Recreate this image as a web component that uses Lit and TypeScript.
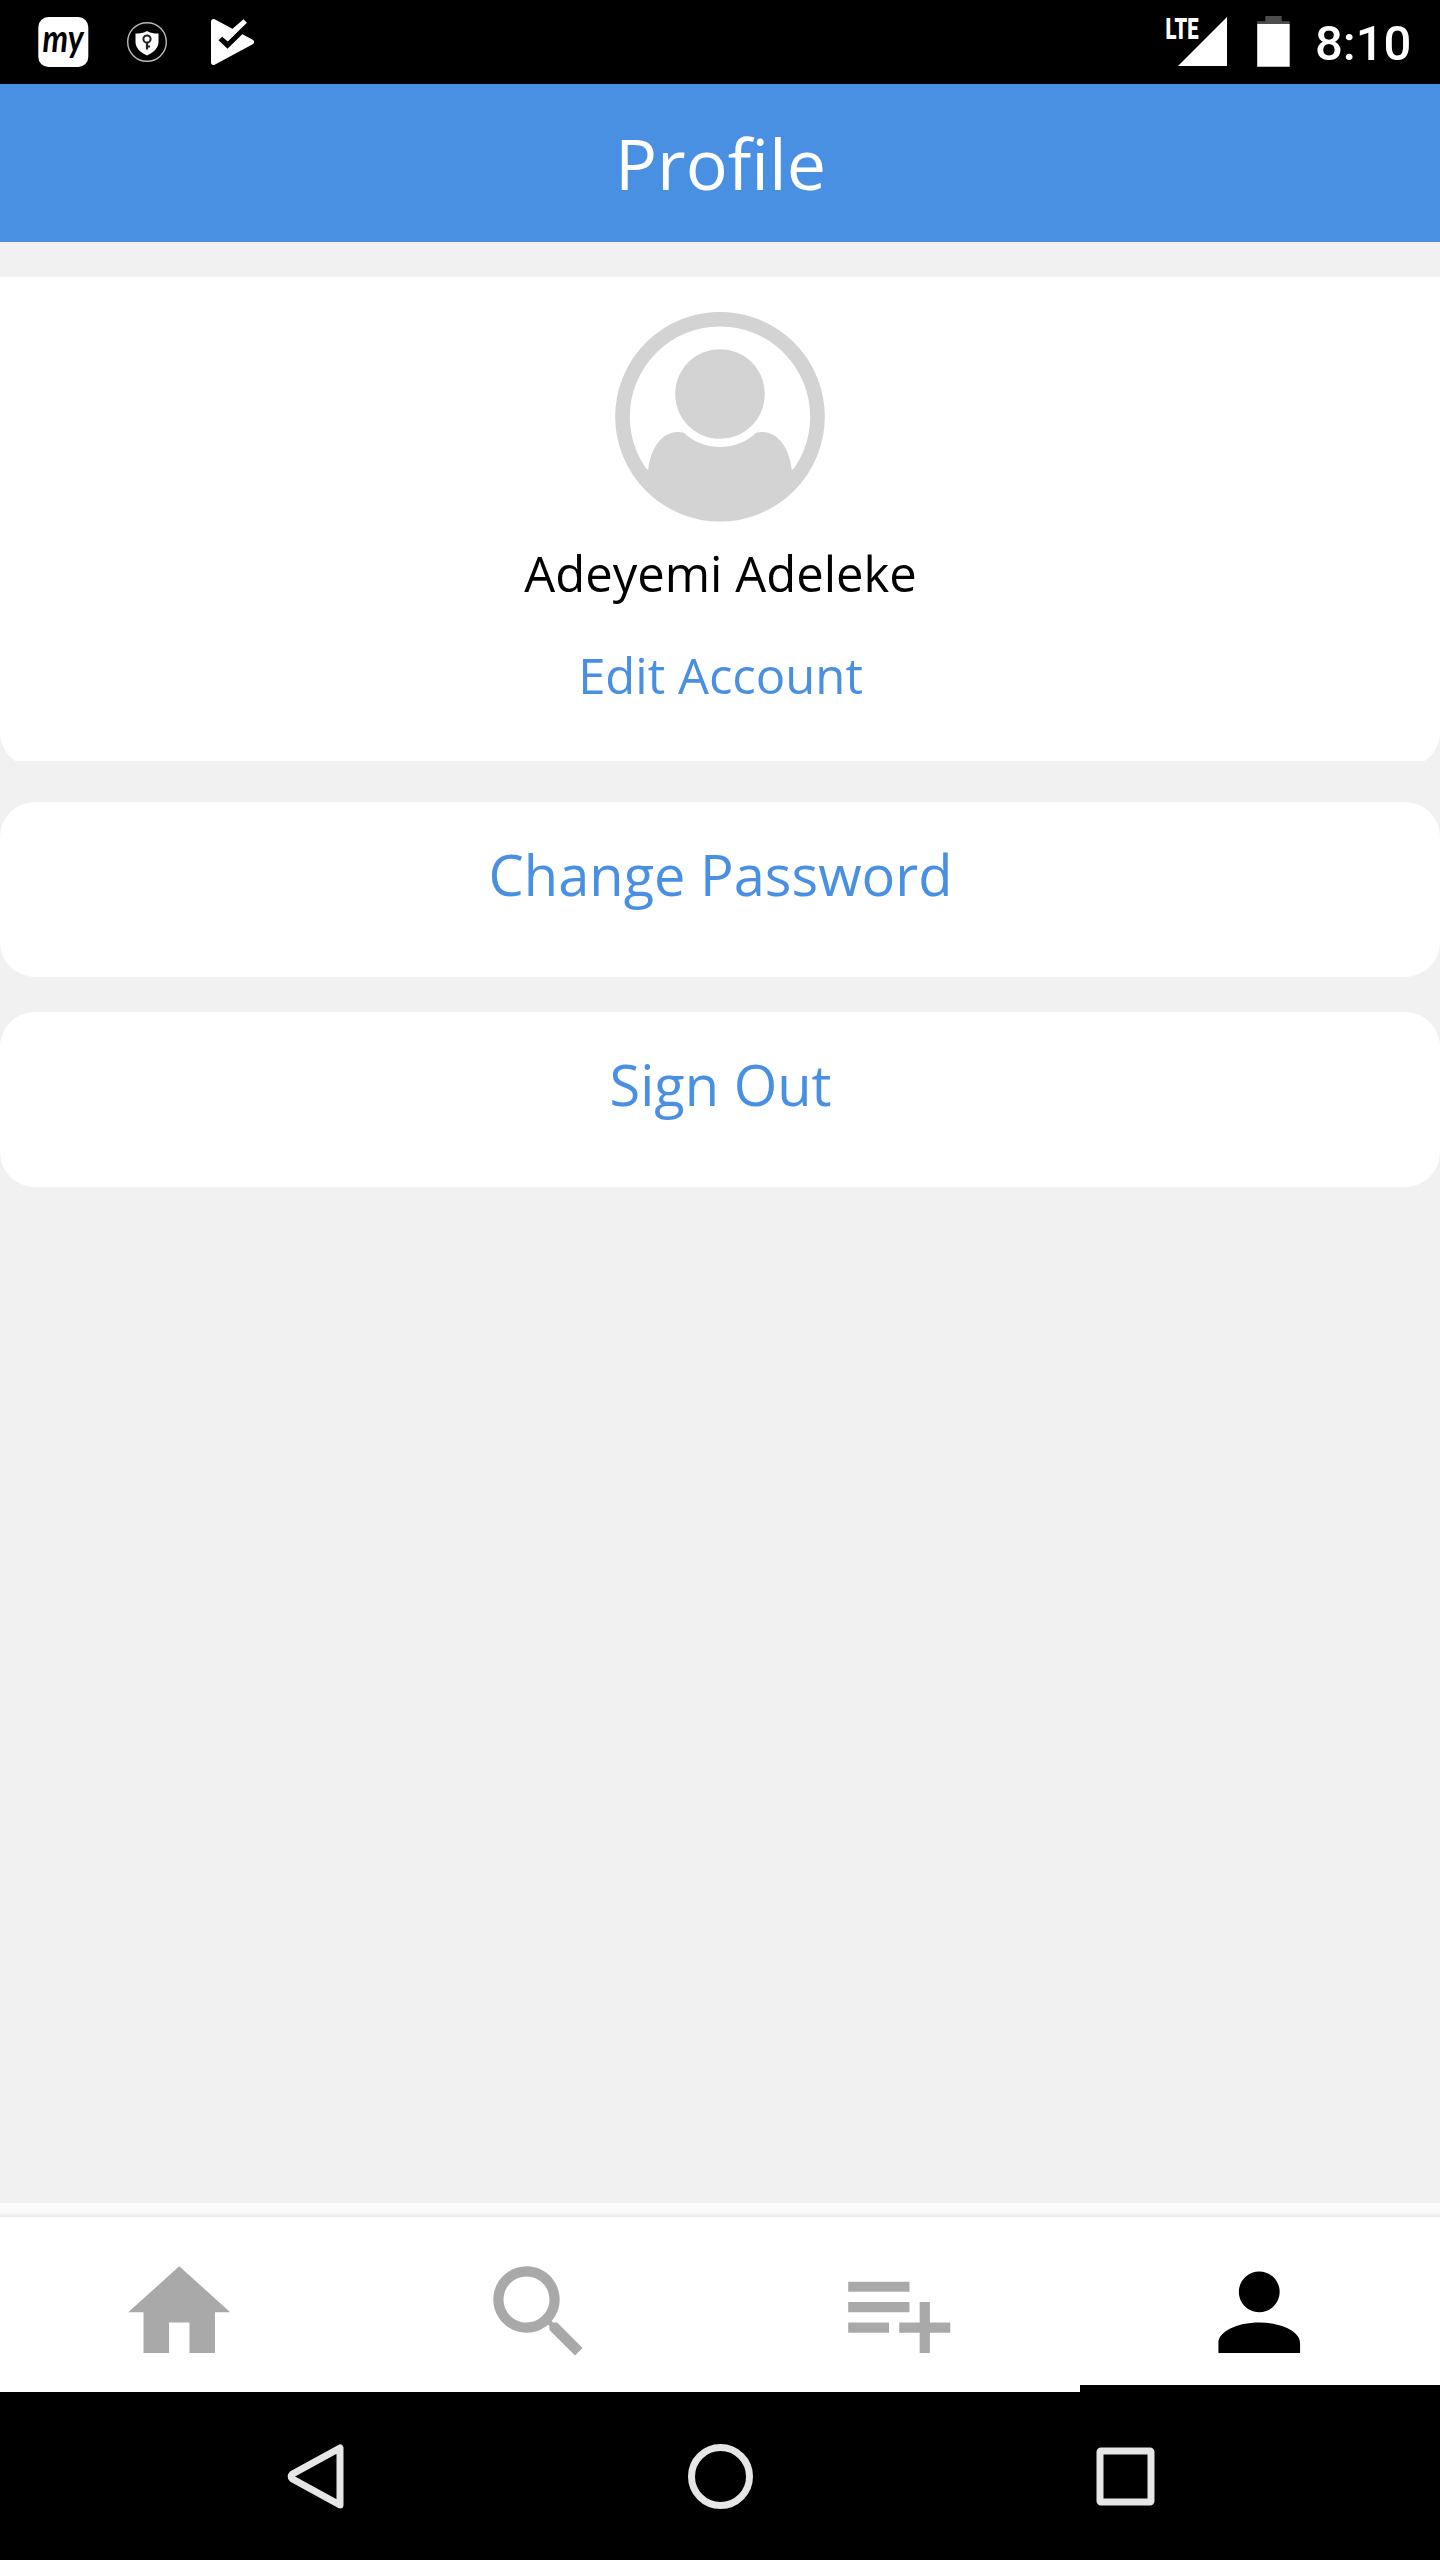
import { LitElement, html, css, svg } from "lit";
import { customElement, property } from "lit/decorators.js";
import { classMap } from "lit/directives/class-map.js";

const TABS = [
  { id: "home", label: "Home", d: "M10 20v-6h4v6h5v-8h3L12 3 2 12h3v8z" },
  {
    id: "search",
    label: "Search",
    d: "M15.5 14h-.79l-.28-.27C15.41 12.59 16 11.11 16 9.5 16 5.91 13.09 3 9.5 3S3 5.91 3 9.5 5.91 16 9.5 16c1.61 0 3.09-.59 4.23-1.57l.27.28v.79l5 4.99L20.49 19l-4.99-5zm-6 0C7.01 14 5 11.99 5 9.5S7.01 5 9.5 5 14 7.01 14 9.5 11.99 14 9.5 14z",
  },
  {
    id: "add",
    label: "Add to list",
    d: "M14 10H2v2h12v-2zm0-4H2v2h12V6zm4 8v-4h-2v4h-4v2h4v4h2v-4h4v-2h-4zM2 16h8v-2H2v2z",
  },
  {
    id: "profile",
    label: "Profile",
    d: "M12 12c2.21 0 4-1.79 4-4s-1.79-4-4-4-4 1.79-4 4 1.79 4 4 4zm0 2c-4.42 0-8 1.79-8 4v2h16v-2c0-2.21-3.580-4-8-4z",
  },
];

@customElement("status-bar")
class StatusBar extends LitElement {
  static styles = css`
    :host { display: flex; justify-content: space-between; height: 84px; background: #000; }
    svg { display: block; }
    .right { display: flex; }
    .time { width: 125px; font: 500 49px/88px Roboto, sans-serif; color: #fff; white-space: nowrap; }
    .logo { font: italic 700 38px Lato, sans-serif; }
    .net { font: 900 29.5px Roboto, sans-serif; }
  `;
  render() {
    return html`
      <svg width="300" height="84" viewBox="0 0 300 84">
        <rect x="38.3" y="17" width="50" height="50" rx="10" fill="#fff" />
        <text class="logo" x="42.500" y="51.500" textLength="41" lengthAdjust="spacingAndGlyphs">my</text>
        <circle cx="147" cy="42" r="19.3" fill="none" stroke="#bbb" stroke-width="1.4" />
        <path fill="#fff" d="M147 31c3 2 7 2.600 11.500 2.600v8.400c0 6-5 10.500-11.500 13.600-6.500-3.100-11.500-7.600-11.500-13.600v-8.400c4.500 0 8.500-.6 11.500-2.600z" />
        <circle cx="147" cy="39" r="3.600" fill="none" stroke="#222" stroke-width="2" />
        <path d="M147 42.500v7M147 46.500h3" stroke="#222" stroke-width="2.200" fill="none" />
        <path fill="#fff" stroke="#fff" stroke-width="5" stroke-linejoin="round" d="M213.500 21.500l38 20.500-38 20.500z" />
        <path d="M218.500 40.300l3.900-3.700 5.300 4.600L247 22l6 6-10.500 6-15 14.800z" fill="#000" />
        <path d="M222.500 37l5.300 4.300L247 22.800l-3.500-3.600-11.500 10z" fill="#fff" />
      </svg>
      <div class="right">
        <svg width="175" height="84" viewBox="1140 0 175 84">
          <text class="net" x="1165.500" y="39.300" fill="#fff" textLength="33" lengthAdjust="spacingAndGlyphs">LTE</text>
          <path d="M1227 17v49h-49z" fill="#fff" />
          <path d="M1265.300 16h16.400v5.300h8v3h-32.500v-3h8.100z" fill="#4d4d4d" />
          <path d="M1257.200 24h32.500v42.700h-32.500z" fill="#fff" />
        </svg>
        <div class="time">8:10</div>
      </div>
    `;
  }
}

@customElement("profile-card")
class ProfileCard extends LitElement {
  @property() name = "";
  static styles = css`
    :host { display: block; height: 484px; overflow: hidden; }
    .card {
      display: flex; flex-direction: column; align-items: center; box-sizing: border-box;
      height: 490px; padding-top: 35px; background: #fff; border-radius: 0 0 35px 35px;
      font: 49px/66px "Open Sans", sans-serif;
    }
    .name { margin-top: 18px; padding-left: 1px; color: #000; }
    .edit { margin-top: 36px; padding-left: 1px; color: #4a90e2; }
  `;
  render() {
    return html`
      <div class="card">
        <svg width="210" height="210" viewBox="0 0 210 210">
          <defs><clipPath id="disc"><circle cx="105" cy="104.700" r="104" /></clipPath></defs>
          <circle cx="105" cy="104.700" r="97.500" fill="none" stroke="#d3d3d3" stroke-width="14.600" />
          <circle cx="105" cy="82" r="44.800" fill="#d3d3d3" />
          <path clip-path="url(#disc)" fill="#d3d3d3"
            d="M33.300 158C35 137 46.500 120 63 120q3 0 5.500 .4a53 53 0 0 0 73 0q2.500-.4 5.500-.4c16.500 0 28 17 29.700 38l14 -8v60h-172v-60z" />
        </svg>
        <div class="name">${this.name}</div>
        <div class="edit">Edit Account</div>
      </div>
    `;
  }
}

@customElement("tab-bar")
class TabBar extends LitElement {
  @property() active = "";
  static styles = css`
    :host { display: block; background: #fff; }
    .shade { height: 14px; background: linear-gradient(#fff 0%, #f8f8f8 70%, #e9e9e9 100%); }
    .tabs { display: grid; grid-template-columns: repeat(4, 1fr); height: 175px; background: #fff; }
    .tab {
      display: flex; justify-content: center; box-sizing: border-box; padding: 34.400px 1px 0 0;
      border-bottom: 7px solid transparent; color: #a9a9a9;
    }
    .on { color: #000; border-bottom-color: #000; }
    svg { width: 122.500px; height: 122.500px; fill: currentColor; }
  `;
  render() {
    return html`
      <div class="shade"></div>
      <div class="tabs">
        ${TABS.map(
          (t) => html`<div class=${classMap({ tab: true, on: t.id === this.active })} role="tab" aria-label=${t.label}>
            <svg viewBox="0 0 24 24">${svg`<path d=${t.d} />`}</svg>
          </div>`
        )}
      </div>
    `;
  }
}

@customElement("system-nav")
class SystemNav extends LitElement {
  static styles = css`
    :host { display: block; height: 168px; background: #000; }
    svg { display: block; fill: none; stroke: #e6e6e6; stroke-width: 7; stroke-linejoin: round; }
  `;
  render() {
    return html`
      <svg width="1440" height="168" viewBox="0 2392 1440 168">
        <path d="M340 2448v57l-47.500-26q-2.500-2.500 0-5z" />
        <circle cx="720.500" cy="2476.500" r="29" />
        <rect x="1100" y="2451" width="51" height="51" rx="1" />
      </svg>
    `;
  }
}

@customElement("app-root")
class AppRoot extends LitElement {
  static styles = css`
    :host { display: flex; flex-direction: column; width: 1440px; height: 2560px; background: #f1f1f1; }
    .header { height: 158px; padding-left: 1px; background: #4a90e2; color: #fff; text-align: center; font: 70px/158px "Open Sans", sans-serif; }
    .content { flex: 1; padding-top: 35px; }
    .action {
      box-sizing: border-box; height: 175px; margin-top: 35px; padding: 34px 0 0 1px; border-radius: 35px;
      background: #fff; color: #4a90e2; text-align: center; font: 56px/76px "Open Sans", sans-serif;
    }
    .first { margin-top: 41px; }
  `;
  render() {
    return html`
      <status-bar></status-bar>
      <div class="header">Profile</div>
      <div class="content">
        <profile-card name="Adeyemi Adeleke"></profile-card>
        <div class="action first">Change Password</div>
        <div class="action">Sign Out</div>
      </div>
      <tab-bar active="profile"></tab-bar>
      <system-nav></system-nav>
    `;
  }
}
